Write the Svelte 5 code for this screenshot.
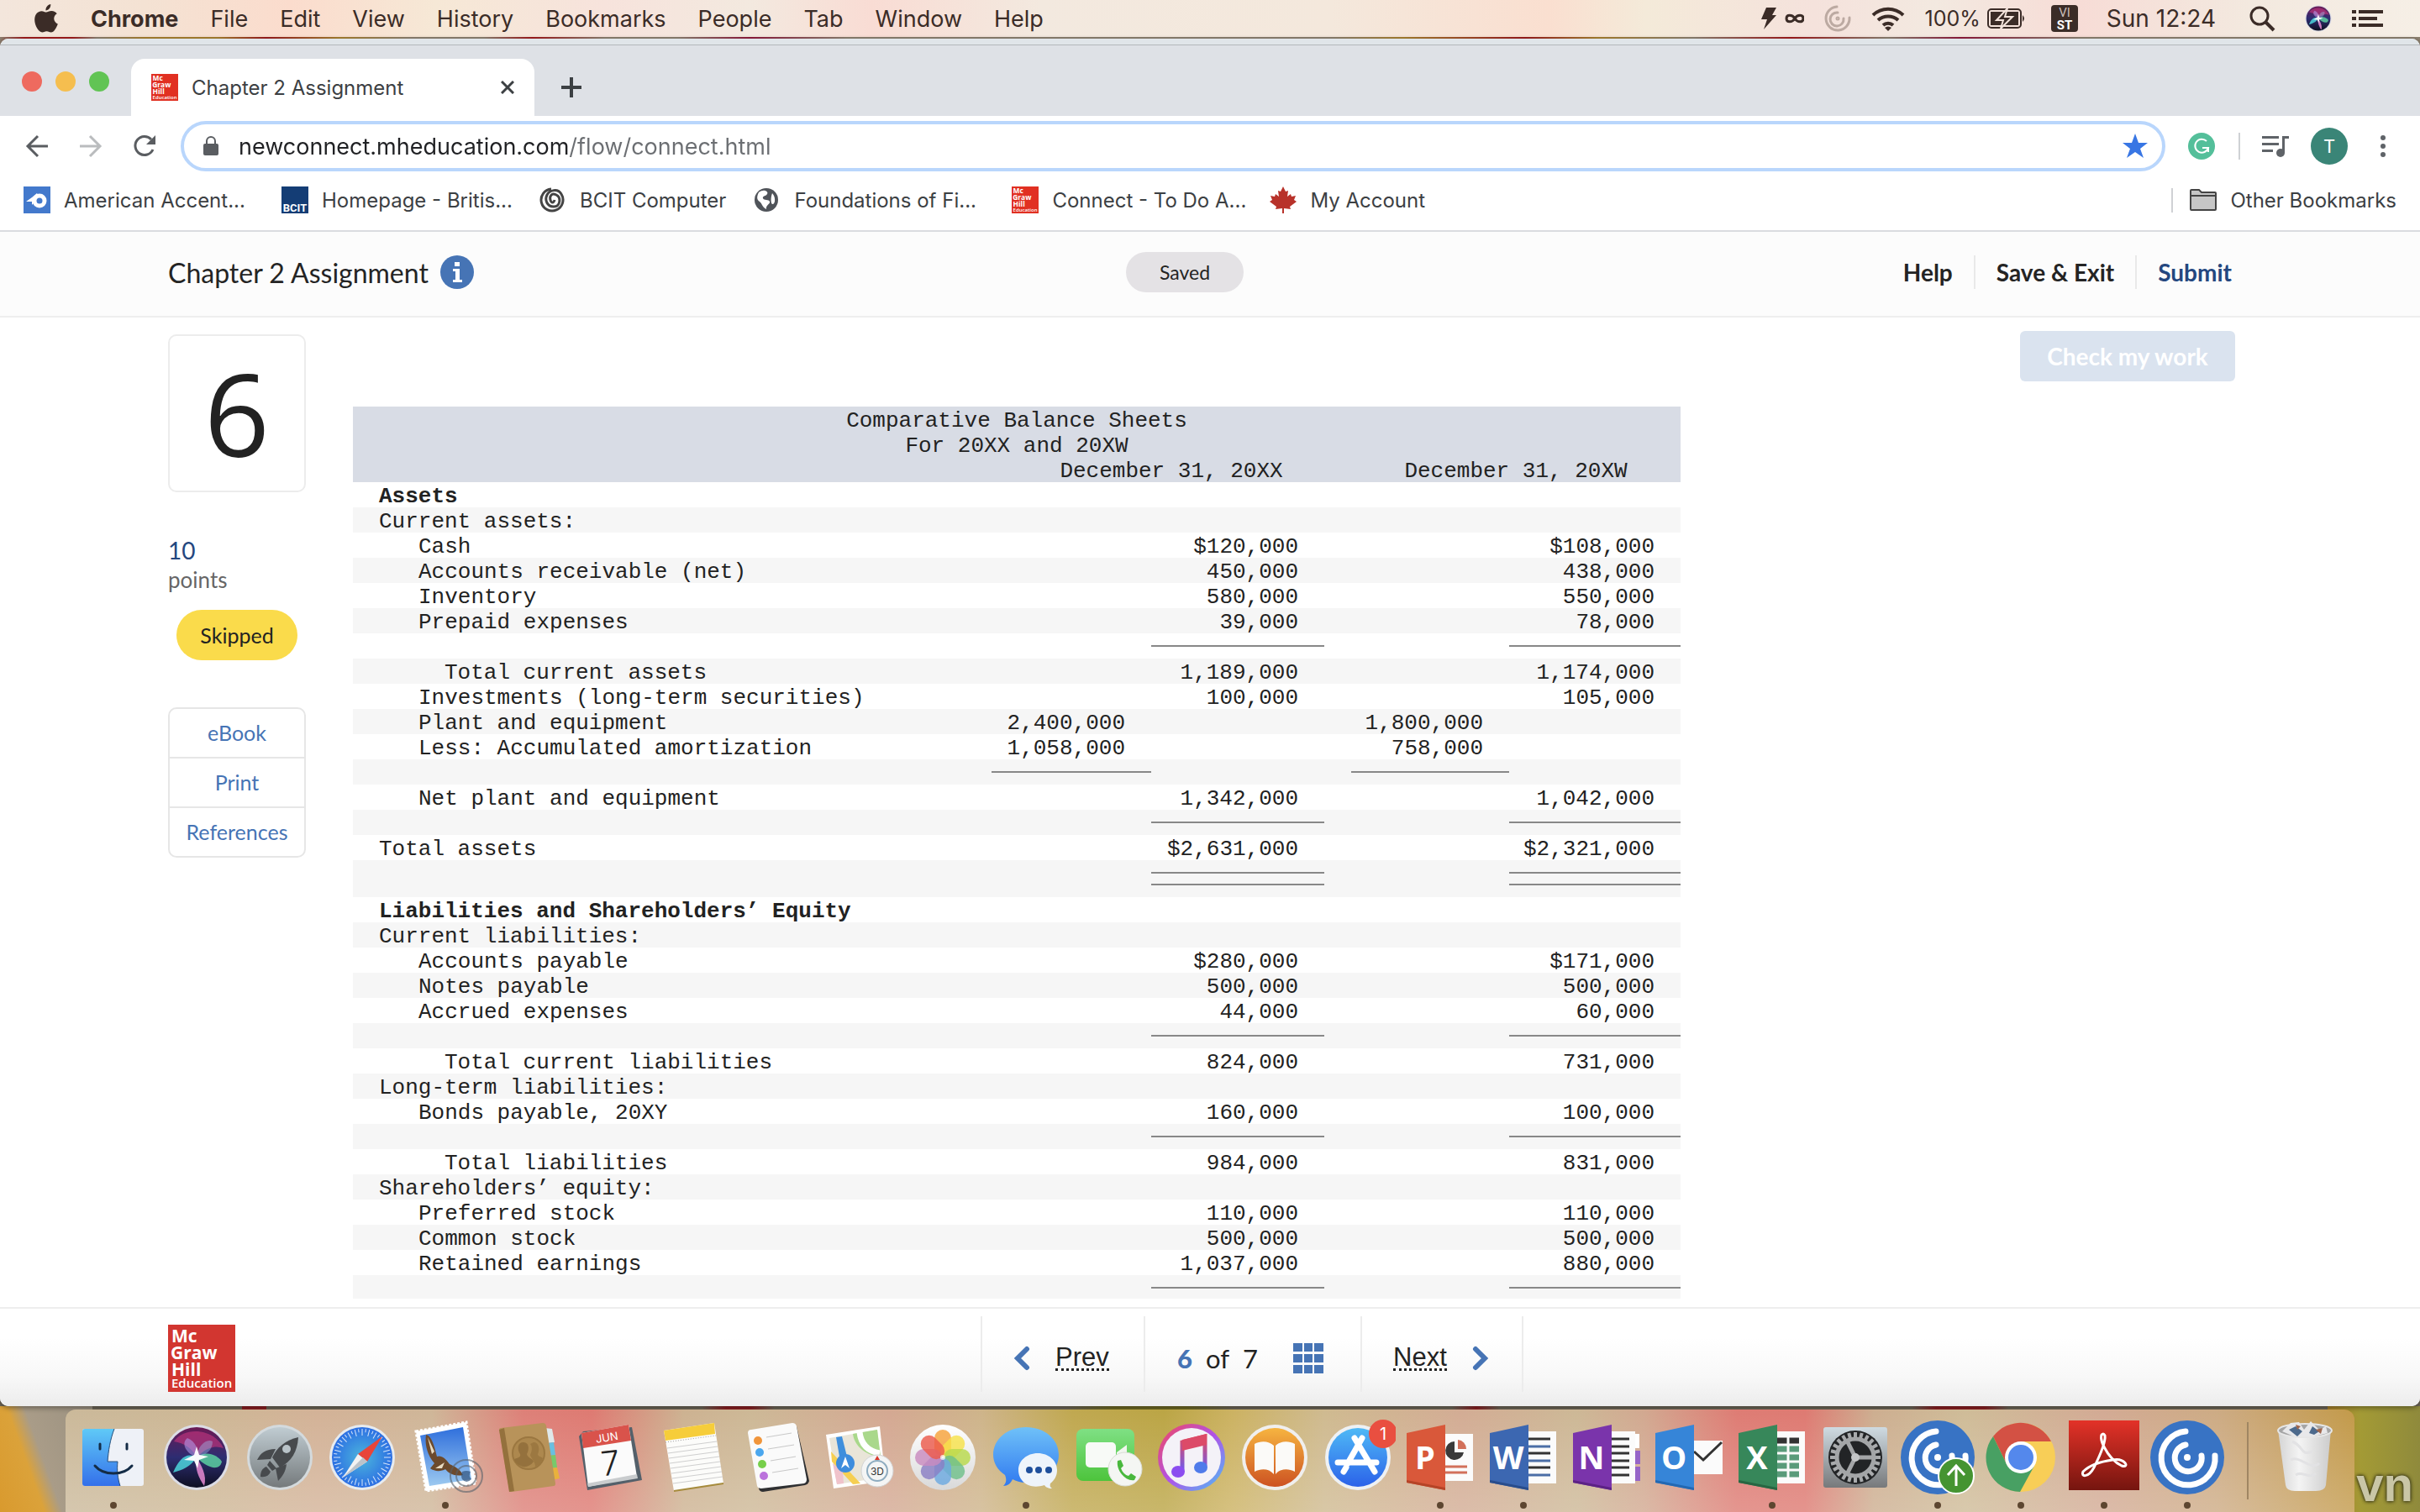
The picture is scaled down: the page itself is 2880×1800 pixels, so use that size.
<script>
	const menus = ['File', 'Edit', 'View', 'History', 'Bookmarks', 'People', 'Tab', 'Window', 'Help'];

	const bookmarks = [
		{ icon: 'accent', label: 'American Accent...', wide: true },
		{ icon: 'bcit', label: 'Homepage - Britis...', wide: true },
		{ icon: 'swirl', label: 'BCIT Computer' },
		{ icon: 'globe', label: 'Foundations of Fi...', wide: true },
		{ icon: 'mgh', label: 'Connect - To Do A...', wide: true },
		{ icon: 'leaf', label: 'My Account' },
	];

	// a/b are the two 20XX columns, c/d the two 20XW ones
	const rows = [
		{ label: 'Assets', bold: true },
		{ label: 'Current assets:' },
		{ label: 'Cash', level: 1, b: '$120,000', d: '$108,000' },
		{ label: 'Accounts receivable (net)', level: 1, b: '450,000', d: '438,000' },
		{ label: 'Inventory', level: 1, b: '580,000', d: '550,000' },
		{ label: 'Prepaid expenses', level: 1, b: '39,000', d: '78,000' },
		{ rule: 'bd' },
		{ label: 'Total current assets', level: 2, b: '1,189,000', d: '1,174,000' },
		{ label: 'Investments (long-term securities)', level: 1, b: '100,000', d: '105,000' },
		{ label: 'Plant and equipment', level: 1, a: '2,400,000', c: '1,800,000' },
		{ label: 'Less: Accumulated amortization', level: 1, a: '1,058,000', c: '758,000' },
		{ rule: 'ac' },
		{ label: 'Net plant and equipment', level: 1, b: '1,342,000', d: '1,042,000' },
		{ rule: 'bd' },
		{ label: 'Total assets', b: '$2,631,000', d: '$2,321,000' },
		{ rule: 'bd', double: true },
		{ label: 'Liabilities and Shareholders’ Equity', bold: true },
		{ label: 'Current liabilities:' },
		{ label: 'Accounts payable', level: 1, b: '$280,000', d: '$171,000' },
		{ label: 'Notes payable', level: 1, b: '500,000', d: '500,000' },
		{ label: 'Accrued expenses', level: 1, b: '44,000', d: '60,000' },
		{ rule: 'bd' },
		{ label: 'Total current liabilities', level: 2, b: '824,000', d: '731,000' },
		{ label: 'Long-term liabilities:' },
		{ label: 'Bonds payable, 20XY', level: 1, b: '160,000', d: '100,000' },
		{ rule: 'bd' },
		{ label: 'Total liabilities', level: 2, b: '984,000', d: '831,000' },
		{ label: 'Shareholders’ equity:' },
		{ label: 'Preferred stock', level: 1, b: '110,000', d: '110,000' },
		{ label: 'Common stock', level: 1, b: '500,000', d: '500,000' },
		{ label: 'Retained earnings', level: 1, b: '1,037,000', d: '880,000' },
		{ rule: 'bd' },
	];

	const dock = [
		{ name: 'Finder', open: true },
		{ name: 'Siri' },
		{ name: 'Launchpad' },
		{ name: 'Safari' },
		{ name: 'Mail', open: true },
		{ name: 'Contacts' },
		{ name: 'Calendar' },
		{ name: 'Notes' },
		{ name: 'Reminders' },
		{ name: 'Maps' },
		{ name: 'Photos' },
		{ name: 'Messages', open: true },
		{ name: 'FaceTime' },
		{ name: 'iTunes' },
		{ name: 'Books' },
		{ name: 'App Store' },
		{ name: 'PowerPoint', open: true },
		{ name: 'Word', open: true },
		{ name: 'OneNote' },
		{ name: 'Outlook' },
		{ name: 'Excel', open: true },
		{ name: 'System Preferences' },
		{ name: 'Receiver Update', open: true },
		{ name: 'Chrome', open: true },
		{ name: 'Acrobat', open: true },
		{ name: 'Receiver', open: true },
	];

	const petals = ['#f7a23b', '#f6e24a', '#b8d94c', '#6fc08a', '#6ca9e0', '#8a7fc4', '#c98bc0', '#ec5a4c'];
	const ticks = Array.from({ length: 48 }, (_, i) => i * 7.5);
	const teeth = Array.from({ length: 24 }, (_, i) => i * 15);

	let url = $state('newconnect.mheducation.com/flow/connect.html');
</script>

{#snippet mgh(size)}
	<svg width={size} height={size} viewBox="0 0 80 80" aria-hidden="true">
		<rect width="80" height="80" fill={size > 40 ? '#d23630' : '#e13022'} />
		<g fill="#fff" font-family="Open Sans, sans-serif" font-weight="700" font-size="21">
			<text x="4" y="21">Mc</text>
			<text x="3" y="41">Graw</text>
			<text x="4" y="61">Hill</text>
			<text x="4" y="75" font-size="15" font-weight="600">Education</text>
		</g>
	</svg>
{/snippet}

{#snippet siri()}
	<circle cx="45" cy="45" r="39" fill="#dcdde6" />
	<circle cx="45" cy="45" r="36" fill="url(#siri)" />
	<path d="M18 26C30 8 66 10 77 34C66 30 56 34 45 45C40 34 30 28 18 26Z" fill="#c0347c" opacity=".65" />
	<path d="M45 45C34 38 24 46 17 63C28 60 38 56 45 45Z" fill="#4fe0e4" opacity=".8" />
	<path d="M45 45C56 36 70 42 75 50C72 62 58 58 45 45Z" fill="#5fd9a5" opacity=".8" />
	<path d="M45 45C50 54 58 66 54 79C48 70 42 58 45 45Z" fill="#e78bd4" opacity=".85" />
	<path d="M45 45C32 40 26 28 34 22C44 26 48 36 45 45Z" fill="#b5a0f0" opacity=".55" />
	<path d="M45 45C46 32 56 22 64 26C64 36 56 43 45 45Z" fill="#a1c6f2" opacity=".4" />
	<path d="M45 32L48 42L59 44L48 48L46 58L42 49L30 48L42 42Z" fill="#fff" opacity=".95" />
{/snippet}

{#snippet receiver()}
	<circle cx="45" cy="45" r="44" fill="#3873c4" />
	<g fill="none" stroke="#fff" stroke-width="7" stroke-linecap="round">
		<path d="M43 14A32 32 0 1 0 78 43" />
		<path d="M43 30A16 16 0 1 0 62 43" />
	</g>
	<circle cx="45" cy="45" r="4" fill="#fff" />
{/snippet}

{#snippet office(letter, color, dark)}
	<path d="M5 16L51 6V84L5 75Z" fill={color} />
	<path d="M5 72L51 81V84L5 75Z" fill={dark} />
	<text x="27" y="59" text-anchor="middle" fill="#fff" font-family="Open Sans, sans-serif" font-weight="700" font-size="38">{letter}</text>
{/snippet}

{#snippet dockIcon(name)}
	<svg class="dock-icon" viewBox="0 0 90 90" aria-hidden="true">
		{#if name === 'Finder'}
			<rect x="8" y="11" width="73" height="68" rx="3" fill="#eef1f7" />
			<path d="M11 11H46C41 24 39 37 38 50H50C49 60 50 70 53 79H11Q8 79 8 76V14Q8 11 11 11Z" fill="url(#finder)" />
			<path d="M46 11C41 24 39 37 38 50H50C49 60 50 70 53 79" fill="none" stroke="#27507c" stroke-width="1" />
			<path d="M29 29V35M61 29V35" stroke="#142c46" stroke-width="3" stroke-linecap="round" />
			<path d="M23 55C33 67 57 67 67 55" fill="none" stroke="#142c46" stroke-width="3" stroke-linecap="round" />
		{:else if name === 'Siri'}
			{@render siri()}
		{:else if name === 'Launchpad'}
			<circle cx="45" cy="45" r="39" fill="#d4dadd" />
			<circle cx="45" cy="45" r="36" fill="url(#launch)" />
			<path d="M67 21C52 24 41 34 36 45L45 57C59 50 66 38 67 21Z" fill="#474a4d" />
			<path d="M40 35C28 35 22 40 18 48L34 47ZM53 53C52 62 48 68 43 73L40 58ZM33 49L41 58L36 61L30 54ZM29 56L34 62C32 67 28 69 22 68C22 62 24 58 29 56Z" fill="#474a4d" />
			<circle cx="53" cy="35" r="5" fill="#b9c3c8" />
		{:else if name === 'Safari'}
			<circle cx="45" cy="45" r="39" fill="#e7ebef" />
			<circle cx="45" cy="45" r="36" fill="url(#safari)" />
			{#each ticks as t, i (t)}
				<path d={i % 2 ? 'M45 11V15' : 'M45 11V19'} stroke="#fff" stroke-width="1" opacity=".8" transform="rotate({t} 45 45)" />
			{/each}
			<path d="M69 20L51 50L40 41Z" fill="#e8453a" />
			<path d="M22 69L40 41L51 50Z" fill="#f2f2f2" />
			<path d="M22 69L51 50L46 45Z" fill="#bcc3ca" />
		{:else if name === 'Mail'}
			<path d="M10 14L70 3L81 76L22 85Z" fill="#fff" stroke="#fff" stroke-width="3" stroke-dasharray="3 2" />
			<path d="M15 19L66 9L76 71L26 79Z" fill="url(#sky)" />
			<path d="M22 18C28 19 31 28 35 44C40 42 45 46 50 53C56 56 62 58 66 66C56 68 49 64 45 59C40 62 32 62 27 58L32 52C25 44 20 32 22 18Z" fill="#6c4a2c" />
			<path d="M24 21L32 38L29 41ZM33 58L44 51L41 58Z" fill="#e9dcc2" />
			<circle cx="70" cy="67" r="19" fill="none" stroke="#56606b" stroke-width="2" opacity=".6" />
			<circle cx="70" cy="67" r="12" fill="none" stroke="#56606b" stroke-width="2" opacity=".6" />
			<path d="M65 62Q70 60 75 62Q72 67 76 71Q70 77 65 71Q63 66 65 62Z" fill="#30527c" opacity=".7" />
		{:else if name === 'Contacts'}
			<path d="M64 10L73 11L76 27L68 28Z" fill="#dfe8ea" />
			<path d="M67 28L75 27L77 42L70 43Z" fill="#69bfe0" />
			<path d="M69 43L77 42L79 57L72 58Z" fill="#78c96b" />
			<path d="M71 58L79 57L82 70L73 72Z" fill="#e9b13c" />
			<path d="M10 12Q10 10 12 10L62 4Q65 4 66 7L77 76Q77 79 75 79L25 86Q22 86 22 84Z" fill="#b8935a" />
			<path d="M10 12L16 10L28 85L22 86Z" fill="#94713d" />
			<circle cx="45" cy="40" r="19" fill="#ad884e" stroke="#9b7740" stroke-width="2" />
			<path d="M39 27C46 27 46 36 43 41C44 46 50 46 51 50Q46 57 38 56Q29 53 28 47C34 45 36 44 35 41C31 35 32 27 39 27Z" fill="#94713d" />
			<path d="M51 27C57 27 59 35 56 41C56 44 60 44 62 46Q60 53 53 56C53 50 48 46 47 42C50 36 49 31 47 29Z" fill="#9c7841" />
		{:else if name === 'Calendar'}
			<path d="M7 20L12 14L70 9L82 72L17 84Z" fill="#54606a" />
			<path d="M10 16L66 6L76 68L18 80Z" fill="#fbfbfb" />
			<path d="M10 16L66 6L69 25L12 34Z" fill="#d9534b" />
			<path d="M17 76L76 65L77 70L18 80Z" fill="#c9ccce" />
			<text x="40" y="26" text-anchor="middle" fill="#fff" font-family="Inter, sans-serif" font-size="13" transform="rotate(-9 40 20)">JUN</text>
			<text x="45" y="66" text-anchor="middle" fill="#222" font-family="Inter, sans-serif" font-size="40" font-weight="300" transform="rotate(-7 44 54)">7</text>
		{:else if name === 'Notes'}
			<path d="M9 13L69 4L80 76L21 85Z" fill="#fcfcfa" />
			<path d="M9 13L69 4L70 17L11 25Z" fill="#f6cd3a" />
			<path d="M11 27L71 19" stroke="#999" stroke-dasharray="1 2" />
			<path d="M13 34L72 26M14 40L73 32M15 46L74 38M16 52L75 44M17 58L76 50M18 64L77 56M19 70L78 62M20 76L79 68" stroke="#cfcfcf" stroke-width="1" />
			<path d="M21 85L80 76" stroke="#a68b3c" stroke-width="2" />
		{:else if name === 'Reminders'}
			<path d="M14 18L68 8L83 73Q82 77 78 78L28 86Q24 86 23 82Z" fill="#2f3032" />
			<path d="M10 16Q10 12 14 12L63 4Q67 4 68 8L80 71Q80 75 77 76L26 82Q22 82 21 79Z" fill="#fafafa" />
			<circle cx="22" cy="25" r="5" fill="#f0953b" />
			<circle cx="24" cy="39" r="5" fill="#4ba7ee" />
			<circle cx="27" cy="53" r="5" fill="#77cf4b" />
			<circle cx="29" cy="67" r="5" fill="#bb73dc" />
			<path d="M32 21L62 16M34 35L65 30M37 49L67 44M39 63L70 58" stroke="#c8c8c8" stroke-width="1" />
		{:else if name === 'Maps'}
			<path d="M4 18L68 8L75 73L13 82Z" fill="#fff" />
			<path d="M8 22L65 12L71 69L17 77Z" fill="#e9e5d8" />
			<path d="M36 17L65 12L69 44C56 44 38 34 36 17Z" fill="#a9d88b" />
			<path d="M44 15C46 32 56 38 68 40" stroke="#fff" stroke-width="7" fill="none" />
			<path d="M10 38L45 76L36 77L11 50Z" fill="#f6cf52" />
			<path d="M16 21L23 20L29 44H20Z" fill="#3f8fdc" />
			<path d="M12 52L24 62L25 76L17 77Z" fill="#f0c3cb" />
			<circle cx="27" cy="52" r="11" fill="#3e8ddd" />
			<path d="M27 44L32 58L27 54L22 58Z" fill="#fff" />
			<circle cx="65" cy="61" r="19" fill="#f4f5f5" stroke="#d2d3d4" />
			<circle cx="65" cy="61" r="12" fill="none" stroke="#8eacc0" stroke-width="2" />
			<path d="M65 43L68 48H62Z" fill="#d8382c" />
			<text x="65" y="66" text-anchor="middle" font-family="Inter, sans-serif" font-size="12" fill="#333">3D</text>
		{:else if name === 'Photos'}
			<circle cx="45" cy="45" r="39" fill="url(#pearl)" />
			{#each petals as p, i (p)}
				<rect x="35" y="12" width="20" height="32" rx="10" fill={p} opacity=".82" transform="rotate({i * 45} 45 45)" />
			{/each}
			<circle cx="45" cy="45" r="3" fill="#fff" opacity=".7" />
		{:else if name === 'Messages'}
			<path d="M45 9C67 9 84 23 84 42S67 75 45 75C38 75 33 73 29 71C27 76 23 79 18 79C22 75 22 71 20 66C11 60 6 51 6 42C6 23 23 9 45 9Z" fill="url(#bubble)" />
			<path d="M59 40C72 40 82 49 82 60C82 67 79 72 74 76C73 79 74 81 76 82C71 82 68 80 67 78C48 84 36 73 36 60C36 49 46 40 59 40Z" fill="#eef4fb" />
			<circle cx="49" cy="60" r="4" fill="#1f4f9c" />
			<circle cx="60" cy="60" r="4" fill="#1f4f9c" />
			<circle cx="72" cy="60" r="4" fill="#1f4f9c" />
		{:else if name === 'FaceTime'}
			<rect x="6" y="11" width="69" height="62" rx="8" fill="url(#green)" />
			<rect x="17" y="27" width="36" height="30" rx="5" fill="#f8faf7" />
			<path d="M54 39L66 30V54L54 46Z" fill="#f1f6ef" />
			<circle cx="64" cy="59" r="20" fill="#f4f6f3" stroke="#d9ddd6" />
			<path d="M55 49L59 48L62 55L59 58C61 63 64 66 68 67L71 64L77 68L75 72C65 74 53 61 55 49Z" fill="#49b83d" />
		{:else if name === 'iTunes'}
			<circle cx="45" cy="45" r="40" fill="url(#itunes)" />
			<circle cx="45" cy="45" r="35" fill="#f4f2f8" />
			<path d="M34 62V27L61 20V56" fill="none" stroke="url(#note)" stroke-width="5" />
			<path d="M34 24L63 17V30L34 37Z" fill="#dc4a68" />
			<ellipse cx="29" cy="62" rx="8" ry="7" fill="#8b4df0" />
			<ellipse cx="56" cy="57" rx="8" ry="7" fill="#4f7bea" />
		{:else if name === 'Books'}
			<circle cx="45" cy="45" r="39" fill="#f0efee" />
			<circle cx="45" cy="45" r="35" fill="url(#books)" />
			<path d="M44 31C38 25 28 25 21 29V62C29 58 38 58 44 65ZM46 31C52 25 62 25 69 29V62C61 58 52 58 46 65Z" fill="#fbfaf8" />
		{:else if name === 'App Store'}
			<circle cx="45" cy="45" r="39" fill="#eef1f4" />
			<circle cx="45" cy="45" r="35" fill="url(#store)" />
			<g stroke="#fff" stroke-width="7" stroke-linecap="round">
				<path d="M50 22L33 52M31 57L28 62M41 22L65 62M21 51H67" />
			</g>
			<circle cx="75" cy="17" r="17" fill="#e94f40" />
			<text x="75" y="24" text-anchor="middle" font-family="Inter, sans-serif" font-size="20" fill="#fff">1</text>
		{:else if name === 'PowerPoint'}
			<rect x="46" y="17" width="38" height="56" fill="#fbfbfb" />
			<path d="M62 26A11 11 0 1 0 73 39H62Z" fill="#3a3a3a" />
			<path d="M66 24A11 11 0 0 1 76 35H66Z" fill="#d2705a" />
			<path d="M51 56H77M51 63H77" stroke="#d2705a" stroke-width="3" />
			{@render office('P', '#d9583a', '#b54427')}
		{:else if name === 'Word'}
			<rect x="46" y="14" width="38" height="62" fill="#fbfbfb" />
			<path d="M51 23H77M51 40H77M51 57H77" stroke="#333" stroke-width="3" />
			<path d="M51 32H77M51 49H77M51 66H77" stroke="#4b6ea6" stroke-width="3" />
			{@render office('W', '#3c67b1', '#294d8c')}
		{:else if name === 'OneNote'}
			<path d="M79 17H84V34H79Z" fill="#fff" />
			<path d="M79 37H85V53H79ZM79 56H85V73H79Z" fill="#9665c8" />
			<rect x="46" y="14" width="33" height="62" fill="#fbfbfb" />
			<path d="M51 23H72M51 32H72M51 40H72M51 49H72M51 57H72M51 66H72" stroke="#333" stroke-width="3" />
			{@render office('N', '#7a34ab', '#5c2285')}
		{:else if name === 'Outlook'}
			<rect x="46" y="25" width="39" height="40" fill="#fbfbfb" />
			<path d="M51 38L62 48L84 27" fill="none" stroke="#333" stroke-width="3" />
			{@render office('O', '#3685d8', '#2368b2')}
		{:else if name === 'Excel'}
			<rect x="46" y="14" width="38" height="62" fill="#fbfbfb" />
			<path d="M51 25H77" stroke="#333" stroke-width="7" />
			<path d="M51 35H77M51 45H77M51 55H77M51 65H77" stroke="#5a9b7a" stroke-width="7" />
			<path d="M64 18V72" stroke="#fbfbfb" stroke-width="3" />
			{@render office('X', '#37875a', '#286642')}
		{:else if name === 'System Preferences'}
			<rect x="7" y="9" width="76" height="72" rx="3" fill="url(#prefs)" />
			<circle cx="45" cy="45" r="32" fill="#222426" />
			{#each teeth as t (t)}
				<path d="M43 15H47V22H43Z" fill="#a9abad" transform="rotate({t} 45 45)" />
			{/each}
			<circle cx="45" cy="45" r="22" fill="none" stroke="#a3a5a7" stroke-width="5" />
			<path d="M45 45L35 25M45 45H67M45 45L35 65" stroke="#a3a5a7" stroke-width="5" />
			<circle cx="45" cy="45" r="5" fill="#c4c6c8" />
		{:else if name === 'Receiver Update'}
			{@render receiver()}
			<circle cx="67" cy="67" r="21" fill="#459431" stroke="#fff" stroke-width="2" />
			<path d="M67 79V56M57 66L67 55L77 66" fill="none" stroke="#fff" stroke-width="3" />
		{:else if name === 'Chrome'}
			<circle cx="45" cy="45" r="41" fill="#f8ce57" />
			<path d="M45 26H81A41 41 0 0 0 12 20L29 55L45 45Z" fill="#d35144" />
			<path d="M12 20A41 41 0 0 0 44 86L61 55L29 55Z" fill="#48a063" />
			<circle cx="45" cy="45" r="19" fill="#fff" />
			<circle cx="45" cy="45" r="15" fill="#5488ec" />
		{:else if name === 'Acrobat'}
			<rect x="3" y="1" width="84" height="83" fill="url(#acro)" />
			<path d="M44 17C36 18 48 46 66 55C76 58 70 45 55 48C40 50 27 55 20 62C17 68 26 70 33 57C40 43 47 26 46 19Q45 17 44 17Z" fill="none" stroke="#fff" stroke-width="3" />
		{:else}
			{@render receiver()}
		{/if}
	</svg>
{/snippet}

<!-- shared gradients for the dock and menu bar icons -->
<svg class="defs" width="0" height="0" aria-hidden="true">
	<defs>
		<linearGradient id="finder" x2="0" y2="1"><stop stop-color="#5fc9f7" /><stop offset="1" stop-color="#3470ea" /></linearGradient>
		<linearGradient id="siri" x2="0" y2="1"><stop stop-color="#6b1a55" /><stop offset=".5" stop-color="#2d2d72" /><stop offset="1" stop-color="#0e0f22" /></linearGradient>
		<linearGradient id="launch" x2="0" y2="1"><stop stop-color="#c0ccd2" /><stop offset="1" stop-color="#757a7c" /></linearGradient>
		<radialGradient id="safari"><stop stop-color="#4cb6dc" /><stop offset="1" stop-color="#2c6fe3" /></radialGradient>
		<linearGradient id="sky" x2="0" y2="1"><stop stop-color="#2f6fdc" /><stop offset="1" stop-color="#9cc9f0" /></linearGradient>
		<linearGradient id="pearl" x2="0" y2="1"><stop stop-color="#ffffff" /><stop offset="1" stop-color="#d9d9d9" /></linearGradient>
		<linearGradient id="bubble" x2="0" y2="1"><stop stop-color="#6fc1f8" /><stop offset="1" stop-color="#3079f0" /></linearGradient>
		<linearGradient id="green" x2="0" y2="1"><stop stop-color="#7fe084" /><stop offset="1" stop-color="#4dc43c" /></linearGradient>
		<linearGradient id="itunes" x2="1" y2="1"><stop stop-color="#f4485a" /><stop offset=".5" stop-color="#b052e8" /><stop offset="1" stop-color="#49c3f5" /></linearGradient>
		<linearGradient id="note" x2="0" y2="1"><stop stop-color="#e44a5e" /><stop offset="1" stop-color="#6b5cf0" /></linearGradient>
		<linearGradient id="books" x2="0" y2="1"><stop stop-color="#f6b440" /><stop offset="1" stop-color="#cd5222" /></linearGradient>
		<linearGradient id="store" x2="0" y2="1"><stop stop-color="#4fb9f6" /><stop offset="1" stop-color="#2b62e9" /></linearGradient>
		<linearGradient id="prefs" x2="0" y2="1"><stop stop-color="#cfdbe2" /><stop offset="1" stop-color="#77797b" /></linearGradient>
		<linearGradient id="acro" x2="0" y2="1"><stop stop-color="#e33228" /><stop offset="1" stop-color="#75150f" /></linearGradient>
		<linearGradient id="basket" x2="1" y2="0"><stop stop-color="#d4d4d4" /><stop offset=".4" stop-color="#f4f4f4" /><stop offset="1" stop-color="#cccccc" /></linearGradient>
	</defs>
</svg>

<div class="desktop">
	<header class="menubar">
		<nav class="menus" aria-label="Menu bar">
			<svg class="apple" width="30" height="34" viewBox="0 0 28 32" aria-hidden="true">
				<path d="M19 0C19.200 4 16.500 7 13.500 7C13.200 3.500 16 .5 19 0ZM14 9C15.500 9 17 7.500 20 7.500C22.500 7.500 25 9 26 10.500C21 13.500 22 20 27 22C25.500 26.500 22.500 31.500 19.500 31.500C17.500 31.500 17 30.300 14.500 30.300S11.500 31.500 9.500 31.500C5.500 31.500 1 24 1 17.500C1 11 5 7.700 8.800 7.700C11 7.700 12.800 9 14 9Z" fill="#3b2c27" />
			</svg>
			<button class="app">Chrome</button>
			{#each menus as m (m)}
				<button>{m}</button>
			{/each}
		</nav>
		<div class="status">
			<svg width="52" height="32" viewBox="0 0 52 32" fill="#3b2c27" aria-hidden="true">
				<path d="M7 3H19L14 12H19L4 29L8 17H1Z" />
				<path d="M41 16C38 11 31 11 31 16S38 21 41 16C44 11 51 11 51 16S44 21 41 16Z" fill="none" stroke="#3b2c27" stroke-width="3" />
			</svg>
			<svg width="32" height="32" viewBox="0 0 32 32" fill="none" stroke="#bcaaa2" stroke-width="3" stroke-linecap="round" aria-hidden="true">
				<path d="M15 2A14 14 0 1 0 30 15M16 9A8 8 0 1 0 23 16" />
				<circle cx="16" cy="16" r="1" />
			</svg>
			<svg width="40" height="32" viewBox="0 0 40 32" fill="none" stroke="#3b2c27" stroke-width="4" aria-hidden="true">
				<path d="M2 12A26 26 0 0 1 38 12M8 18A18 18 0 0 1 32 18M14 24A9 9 0 0 1 26 24" />
				<path d="M16 27L20 31L24 27Q20 24 16 27Z" fill="#3b2c27" stroke="none" />
			</svg>
			<span class="battery">
				100%
				<svg width="46" height="26" viewBox="0 0 46 26" aria-hidden="true">
					<rect x="1" y="2" width="39" height="22" rx="4" fill="none" stroke="#3b2c27" stroke-width="2" />
					<rect x="4" y="5" width="33" height="16" fill="#3b2c27" />
					<path d="M42 9Q46 13 42 17Z" fill="#3b2c27" />
					<path d="M24 1L11 15H19L16 25L30 11H21Z" fill="#3b2c27" stroke="#f4e4dc" stroke-width="2" />
				</svg>
			</span>
			<svg width="48" height="34" viewBox="0 0 48 34" aria-hidden="true">
				<rect x="6" y="1" width="32" height="32" rx="4" fill="#3b2c27" />
				<text x="22" y="15" text-anchor="middle" font-family="Roboto, sans-serif" font-size="15" fill="#c9bdb8">VI</text>
				<text x="22" y="30" text-anchor="middle" font-family="Roboto, sans-serif" font-size="15" font-weight="700" fill="#fff">ST</text>
			</svg>
			<time>Sun 12:24</time>
			<svg width="58" height="32" viewBox="0 0 58 32" fill="none" stroke="#3b2c27" stroke-width="3" aria-hidden="true">
				<circle cx="28" cy="13" r="10" />
				<path d="M35 20L45 30" stroke-width="4" />
			</svg>
			<svg width="32" height="32" viewBox="5 5 80 80" aria-hidden="true">{@render siri()}</svg>
			<svg width="37" height="24" viewBox="0 0 37 24" fill="#3b2c27" aria-hidden="true">
				<path d="M0 2H5V6H0ZM8 2H37V6H8ZM0 10H5V14H0ZM8 10H30V14H8ZM0 18H5V22H0ZM8 18H37V22H8Z" />
			</svg>
		</div>
	</header>

	<div class="window">
		<div class="tabstrip">
			<div class="lights"><span class="red"></span><span class="amber"></span><span class="green"></span></div>
			<div class="tab">
				{@render mgh(32)}
				<span class="tab-title">Chapter 2 Assignment</span>
				<button aria-label="Close tab">
					<svg width="16" height="16" viewBox="0 0 16 16"><path d="M1 1L15 15M15 1L1 15" stroke="#3c4043" stroke-width="3" /></svg>
				</button>
			</div>
			<button class="newtab" aria-label="New tab">
				<svg width="24" height="24" viewBox="0 0 24 24"><path d="M12 0V24M0 12H24" stroke="#3c4043" stroke-width="4" /></svg>
			</button>
		</div>

		<div class="toolbar">
			<div class="history">
				<button aria-label="Back">
					<svg width="28" height="28" viewBox="0 0 28 28" fill="none" stroke="#5a5d61" stroke-width="3"><path d="M27 14H3M15 2L3 14L15 26" /></svg>
				</button>
				<button aria-label="Forward">
					<svg width="28" height="28" viewBox="0 0 28 28" fill="none" stroke="#babcbe" stroke-width="3"><path d="M1 14H25M13 2L25 14L13 26" /></svg>
				</button>
				<button aria-label="Reload">
					<svg width="28" height="28" viewBox="0 0 28 28"><path d="M24 18A11 11 0 1 1 22 6" fill="none" stroke="#5a5d61" stroke-width="3" /><path d="M27 1V12H16Z" fill="#5a5d61" /></svg>
				</button>
			</div>
			<label class="omnibox">
				<svg width="18" height="24" viewBox="0 0 18 24"><rect y="9" width="18" height="14" rx="2" fill="#5a5d61" /><path d="M4 10V6A5 5 0 0 1 14 6V10" fill="none" stroke="#5a5d61" stroke-width="2" /></svg>
				<input type="text" aria-label="Address" bind:value={url} />
				<svg width="32" height="32" viewBox="0 0 32 32"><path d="M16 1L20 12H31L22 19L26 30L16 23L6 30L10 19L1 12H12Z" fill="#3876e4" /></svg>
			</label>
			<div class="extensions">
				<svg width="32" height="32" viewBox="0 0 32 32" aria-hidden="true">
					<circle cx="16" cy="16" r="16" fill="#54bf9a" />
					<path d="M22 10A8 8 0 1 0 24 18H17M24 17V23" fill="none" stroke="#fff" stroke-width="2" />
				</svg>
				<span class="bar"></span>
				<svg width="32" height="26" viewBox="0 0 32 26" fill="#5f6368" aria-hidden="true">
					<path d="M0 1H20V4H0ZM0 9H20V12H0ZM0 17H13V20H0ZM24 1H32V4H27V21H24Z" />
					<circle cx="22" cy="21" r="5" />
				</svg>
				<span class="avatar">T</span>
				<svg width="8" height="28" viewBox="0 0 8 28" fill="#5f6368" aria-hidden="true"><circle cx="4" cy="4" r="3" /><circle cx="4" cy="14" r="3" /><circle cx="4" cy="24" r="3" /></svg>
			</div>
		</div>

		<nav class="bookmarks" aria-label="Bookmarks">
			{#each bookmarks as b (b.label)}
				<a href="#bookmark" class:wide={b.wide}>
					{#if b.icon === 'mgh'}
						{@render mgh(32)}
					{:else}
						<svg width="32" height="32" viewBox="0 0 32 32" aria-hidden="true">
							{#if b.icon === 'accent'}
								<rect width="32" height="32" fill="#4379cc" />
								<circle cx="19" cy="17" r="6" fill="none" stroke="#fff" stroke-width="5" />
								<path d="M3 18L10 13L16 8L18 12L10 22V18Z" fill="#fff" />
							{:else if b.icon === 'bcit'}
								<rect width="32" height="32" fill="#143d75" />
								<text x="16" y="30" text-anchor="middle" font-family="Roboto, sans-serif" font-size="13" font-weight="700" fill="#fff">BCIT</text>
							{:else if b.icon === 'swirl'}
								<g fill="none" stroke="#444" stroke-width="3">
									<path d="M14 3A13 13 0 1 0 26 9C22 2 12 4 9 10S9 24 17 24S26 13 20 10S12 12 13 16S17 20 18 16" />
								</g>
							{:else if b.icon === 'globe'}
								<circle cx="15" cy="16" r="14" fill="#50545a" />
								<path d="M6 7C12 2 18 6 16 9S10 11 11 14S18 15 19 18S14 22 15 27C10 25 10 20 7 18S3 13 6 7ZM22 8C26 12 26 20 23 21S20 13 22 8Z" fill="#fff" />
							{:else}
								<path d="M16 0L19 6L22 5L21 12L25 9L26 12L31 11L29 16L32 18L24 24L25 27L17 26V32H15V26L7 27L8 24L0 18L3 16L1 11L6 12L7 9L11 12L10 5L13 6Z" fill="#b8322a" />
							{/if}
						</svg>
					{/if}
					<span>{b.label}</span>
				</a>
			{/each}
			<a href="#other" class="other">
				<svg width="32" height="26" viewBox="0 0 32 26" aria-hidden="true">
					<path d="M1 2Q1 1 2 1H11L14 4H30Q31 4 31 5V24Q31 25 30 25H2Q1 25 1 24Z" fill="#c6c6c6" stroke="#444" stroke-width="2" />
					<path d="M2 8H30" stroke="#444" stroke-width="2" />
				</svg>
				<span>Other Bookmarks</span>
			</a>
		</nav>

		<div class="page-head">
			<h1>
				Chapter 2 Assignment
				<svg width="40" height="40" viewBox="0 0 40 40" aria-hidden="true">
					<circle cx="20" cy="20" r="20" fill="#4674b5" />
					<path d="M17 8H23V13H17ZM15 16H23V29H26V32H15V29H18V19H15Z" fill="#fff" />
				</svg>
			</h1>
			<span class="saved">Saved</span>
			<div class="actions">
				<button>Help</button>
				<button>Save &amp; Exit</button>
				<button class="submit">Submit</button>
			</div>
		</div>

		<main>
			<aside>
				<div class="number">6</div>
				<p class="points"><strong>10</strong>points</p>
				<span class="skipped">Skipped</span>
				<nav class="links" aria-label="Resources">
					<a href="#ebook">eBook</a>
					<a href="#print">Print</a>
					<a href="#references">References</a>
				</nav>
			</aside>

			<table>
				<colgroup>
					<col />
					<col class="c-a" />
					<col class="c-b" />
					<col class="c-gap" />
					<col class="c-c" />
					<col class="c-d" />
				</colgroup>
				<thead>
					<tr><th colspan="6">Comparative Balance Sheets</th></tr>
					<tr><th colspan="6">For 20XX and 20XW</th></tr>
					<tr>
						<th></th>
						<th colspan="2" class="first">December 31, 20XX</th>
						<th></th>
						<th colspan="2">December 31, 20XW</th>
					</tr>
				</thead>
				<tbody>
					{#each rows as r}
						<tr class:tall={r.double}>
							<td class="label level-{r.level ?? 0}" class:bold={r.bold}>{r.label ?? ''}</td>
							{#each ['a', 'b', 'gap', 'c', 'd'] as col (col)}
								<td class="num">
									{#if r.rule?.includes(col)}
										<div class="rule" class:double={r.double}></div>
									{:else}
										{r[col] ?? ''}
									{/if}
								</td>
							{/each}
						</tr>
					{/each}
				</tbody>
			</table>

			<button class="check" disabled>Check my work</button>
		</main>

		<footer>
			{@render mgh(80)}
			<nav class="pager" aria-label="Questions">
				<a href="#prev" class="prev">
					<svg width="20" height="30" viewBox="0 0 20 30" aria-hidden="true"><path d="M16 4L5 15L16 26" fill="none" stroke="#4674b5" stroke-width="6" stroke-linecap="round" /></svg>
					<span>Prev</span>
				</a>
				<div class="count">
					<strong>6</strong><span>of</span><span>7</span>
					<svg width="36" height="36" viewBox="0 0 36 36" fill="#4674b5" aria-hidden="true"><path d="M0 0H11V10H0ZM13 0H23V10H13ZM25 0H36V10H25ZM0 13H11V23H0ZM13 13H23V23H13ZM25 13H36V23H25ZM0 26H11V36H0ZM13 26H23V36H13ZM25 26H36V36H25Z" /></svg>
				</div>
				<a href="#next" class="next">
					<span>Next</span>
					<svg width="20" height="30" viewBox="0 0 20 30" aria-hidden="true"><path d="M4 4L15 15L4 26" fill="none" stroke="#4674b5" stroke-width="6" stroke-linecap="round" /></svg>
				</a>
			</nav>
		</footer>
	</div>

	<span class="watermark">vn</span>
	<div class="dock">
		<div class="apps">
			{#each dock as item (item.name)}
				<button class="slot" aria-label={item.name}>
					{@render dockIcon(item.name)}
					<span class="dot" class:open={item.open}></span>
				</button>
			{/each}
		</div>
		<button class="trash" aria-label="Trash">
			<svg class="dock-icon" viewBox="0 0 90 90" aria-hidden="true">
				<path d="M13 12L76 12L70 78Q69 85 58 85H33Q23 85 22 78Z" fill="url(#basket)" />
				<ellipse cx="45" cy="13" rx="32" ry="8" fill="#a5a5a5" stroke="#e6e6e6" stroke-width="2" />
				<path d="M18 14L28 4L38 3L44 12L52 2L62 12L70 8L72 16L56 20H32Z" fill="#e8e8ea" />
				<path d="M26 12L34 8L42 14L36 20ZM54 8L62 14L56 18L50 16Z" fill="#4d6a8c" />
				<path d="M34 6L40 8L36 12ZM58 12L66 10L64 17Z" fill="#a0664c" />
				<path d="M30 26C44 32 40 44 54 38M28 48C40 42 52 62 62 52M34 66C42 60 50 72 58 64" stroke="#e2e2e4" stroke-width="3" fill="none" />
			</svg>
		</button>
	</div>
</div>

<style>
	:global(body) {
		margin: 0;
	}

	.defs {
		position: absolute;
	}

	button {
		font: inherit;
		color: inherit;
		background: none;
		border: 0;
		padding: 0;
	}

	a {
		color: inherit;
		text-decoration: none;
	}

	svg {
		display: block;
		flex: none;
	}

	/* wallpaper shows in the top strip, under the window and beside the dock */
	.desktop {
		height: 100vh;
		display: flex;
		flex-direction: column;
		position: relative;
		overflow: hidden;
		font-family: Inter, sans-serif;
		background:
			linear-gradient(90deg, #8c8070 0, #a01b1c 1%, #a01b1c 3%, #8c8070 4%, #a8802f 6%, #a8802f 9%, #9a1b1c 11%, #a8802f 14%, #8c8070 17%, #8c8070 20%, #a01b1c 22%, #8c8070 25%, #8c8070 28%, #8f1b3c 31%, #8c8070 35%, #8c8070 55%, #a8802f 58%, #9a1b1c 63%, #a8802f 66%, #8c8070 70%, #a01b1c 74%, #8c8070 78%, #8f1b3c 81%, #8c8070 86%) left top / 100% 60px no-repeat,
			linear-gradient(70deg, #d99a2e 0, #dba23a 50px, #a99c88 70px, #9b9180) left bottom / 110px 126px no-repeat,
			linear-gradient(90deg, #a9802a, #a39a35 40px, #8f8a3c) right bottom / 110px 126px no-repeat,
			linear-gradient(90deg, #6e6657 0 10%, #8c1f22 10% 11%, #6e6657 11% 29%, #8c1f22 30% 31%, #6e6657 32% 44%, #6f6a22 46% 49%, #6e6657 51% 60%, #8c1f22 61%, #6e6657 62% 79%, #8c1f22 80% 82%, #6e6657 83%);
	}

	.menubar {
		display: flex;
		justify-content: space-between;
		align-items: center;
		height: 44px;
		padding: 0 44px 0 40px;
		font-size: 27px;
		color: #3b2c27;
		background: linear-gradient(90deg, #f3e6dc 0, #f4e2d3 6%, #fbdccd 12%, #f6e8d6 18%, #f7e3dc 25%, #f3e9df 31%, #f9dcd4 36%, #f3e9df 43%, #f4e8dc 55%, #fadfd0 64%, #f4ead9 68%, #f5e2dc 75%, #f3e9e0 80%, #f7dcd6 86%, #f3e9df 93%, #f6efe6);
	}

	.menus,
	.status {
		display: flex;
		align-items: center;
	}

	.menus {
		gap: 38px;
	}

	.app {
		font-weight: 700;
	}

	.status {
		gap: 24px;
	}

	.status time {
		font-size: 28px;
	}

	.battery {
		display: flex;
		align-items: center;
		gap: 8px;
		font-size: 25px;
	}

	.window {
		flex: 1;
		min-height: 0;
		display: flex;
		flex-direction: column;
		margin: 2px 0 4px;
		overflow: hidden;
		border-radius: 10px;
		background: #fff;
		box-shadow: 0 2px 6px #0006;
	}

	.tabstrip {
		display: flex;
		align-items: flex-end;
		height: 92px;
		background: linear-gradient(#e0e5e9 0 7px, #b4b7bb 7px 8px, #dee1e6 8px);
	}

	.lights {
		display: flex;
		gap: 16px;
		align-self: center;
		padding: 10px 26px 0;
	}

	.lights span {
		width: 24px;
		height: 24px;
		border-radius: 50%;
	}

	.red {
		background: #ee6a5f;
	}

	.amber {
		background: #f5be4f;
	}

	.green {
		background: #61c454;
	}

	.tab {
		display: flex;
		align-items: center;
		gap: 16px;
		box-sizing: border-box;
		width: 480px;
		height: 68px;
		padding: 0 24px;
		border-radius: 16px 16px 0 0;
		background: #fff;
	}

	.tab-title {
		flex: 1;
		font-size: 24px;
		color: #3c4043;
	}

	.newtab {
		align-self: flex-end;
		padding: 0 32px 22px;
	}

	.toolbar {
		display: flex;
		align-items: center;
		height: 72px;
		padding: 0 40px 0 30px;
	}

	.history {
		display: flex;
		gap: 36px;
		padding-right: 29px;
	}

	.omnibox {
		flex: 1;
		display: flex;
		align-items: center;
		gap: 24px;
		height: 52px;
		padding: 0 16px 0 23px;
		border: 4px solid #b9d6fc;
		border-radius: 30px;
	}

	/* host in near-black, path in grey */
	.omnibox input {
		flex: 1;
		border: 0;
		padding: 0;
		outline: 0;
		font: 27px Inter, sans-serif;
		color: transparent;
		background: linear-gradient(90deg, #202124 393px, #6b6e72 393px);
		background-clip: text;
	}

	.extensions {
		display: flex;
		align-items: center;
		gap: 26px;
		padding-left: 27px;
	}

	.bar {
		width: 2px;
		height: 32px;
		margin-left: 2px;
		background: #cfd1d4;
	}

	.avatar {
		display: grid;
		place-items: center;
		width: 44px;
		height: 44px;
		margin-right: 12px;
		border-radius: 50%;
		font-size: 22px;
		color: #fff;
		background: #3a8577;
	}

	.bookmarks {
		display: flex;
		align-items: center;
		gap: 33px;
		height: 56px;
		padding: 0 28px 8px;
		border-bottom: 2px solid #dadce0;
		font-size: 24px;
		white-space: nowrap;
		color: #3c4043;
	}

	.bookmarks a {
		display: flex;
		align-items: center;
		gap: 16px;
	}

	.bookmarks .wide {
		width: 274px;
	}

	.bookmarks .other {
		margin-left: auto;
		padding-left: 20px;
		border-left: 2px solid #cfd1d4;
	}

	.page-head,
	main,
	footer,
	.check {
		font-family: Lato, sans-serif;
	}

	.page-head {
		display: grid;
		grid-template-columns: 1140px auto 1fr;
		align-items: center;
		height: 96px;
		padding: 0 224px 4px 200px;
		border-bottom: 2px solid #eee;
		color: #242424;
		background: #fcfcfc;
	}

	h1 {
		display: flex;
		align-items: center;
		gap: 14px;
		margin: 0;
		font-size: 32px;
		font-weight: 400;
	}

	.saved {
		width: 140px;
		border-radius: 24px;
		font-size: 23px;
		line-height: 48px;
		text-align: center;
		background: #e4e2e5;
	}

	.actions {
		display: flex;
		justify-content: flex-end;
		font-size: 28px;
		font-weight: 700;
		line-height: 40px;
	}

	.actions button + button {
		margin-left: 25px;
		padding-left: 25px;
		border-left: 2px solid #e9e9e9;
	}

	.actions .submit {
		color: #24477f;
	}

	main {
		flex: 1;
		min-height: 0;
		display: flex;
		align-items: flex-start;
		margin-bottom: 10px;
		padding: 0 220px 0 200px;
		overflow: hidden;
		color: #222;
	}

	aside {
		flex: none;
		width: 164px;
		padding-top: 20px;
		font-size: 25px;
	}

	.number {
		border: 2px solid #ececec;
		border-radius: 10px;
		font-family: "Open Sans", sans-serif;
		font-size: 136px;
		line-height: 184px;
		text-align: center;
	}

	.points {
		margin: 52px 0 18px;
		font-size: 26px;
		line-height: 35px;
		color: #666;
	}

	.points strong {
		display: block;
		font-weight: 400;
		font-size: 28px;
		color: #24477f;
	}

	.skipped {
		display: block;
		margin: 0 10px 56px;
		border-radius: 30px;
		line-height: 60px;
		text-align: center;
		background: #fadb4b;
	}

	.links {
		border: 2px solid #e6e6e6;
		border-radius: 10px;
		line-height: 57px;
		text-align: center;
		color: #4674b5;
	}

	.links a {
		display: block;
	}

	.links a + a {
		border-top: 2px solid #e6e6e6;
	}

	table {
		flex: 0 1 1580px;
		margin: 106px auto 0 56px;
		table-layout: fixed;
		border-collapse: collapse;
		font: 26px/26px "Liberation Mono", monospace;
	}

	th,
	td {
		height: 26px;
		padding: 4px 0 0;
		vertical-align: top;
	}

	th {
		font-weight: 400;
	}

	thead tr {
		background: #d8dce5;
	}

	tbody tr:nth-child(even) {
		background: #f6f6f6;
	}

	.first {
		padding-left: 32px;
	}

	.c-a {
		width: 190px;
	}

	.c-b {
		width: 206px;
	}

	.c-gap {
		width: 32px;
	}

	.c-c {
		width: 188px;
	}

	.c-d {
		width: 204px;
	}

	.label {
		padding-left: 31px;
		white-space: nowrap;
	}

	.level-1 {
		padding-left: 78px;
	}

	.level-2 {
		padding-left: 109px;
	}

	.bold {
		font-weight: 700;
	}

	.num {
		padding-right: 31px;
		text-align: right;
	}

	.num:has(.rule),
	.num:nth-child(4) {
		padding-right: 0;
	}

	.rule {
		margin-top: 10px;
		border-top: 2px solid #888;
	}

	.double {
		height: 12px;
		border-bottom: 2px solid #888;
	}

	.tall td {
		height: 40px;
	}

	.check {
		flex: none;
		width: 256px;
		margin-top: 16px;
		border-radius: 6px;
		font-size: 28px;
		font-weight: 700;
		line-height: 60px;
		color: #fff;
		background: #dae3ef;
	}

	footer {
		display: flex;
		align-items: center;
		height: 114px;
		padding: 2px 180px 0 200px;
		border-top: 2px solid #eee;
		background: linear-gradient(#fff 30%, #f8f8f8 70%, #ececec);
	}

	.pager {
		flex: 1;
		display: flex;
		justify-content: center;
		margin-bottom: 10px;
		color: #222;
	}

	.pager > * {
		display: flex;
		align-items: center;
		box-sizing: border-box;
		height: 90px;
		padding-top: 10px;
		border-left: 2px solid #ececec;
	}

	.prev,
	.next {
		width: 194px;
		padding-left: 37px;
		gap: 30px;
		font: 31px "Liberation Sans", sans-serif;
	}

	.pager .next {
		border-right: 2px solid #ececec;
	}

	.prev span,
	.next span {
		line-height: 26px;
		border-bottom: 3px dotted #222;
	}

	.count {
		width: 258px;
		padding-left: 38px;
		gap: 16px;
		font-size: 31px;
	}

	.count strong {
		font-weight: 900;
		color: #4674b5;
	}

	.count svg {
		margin-left: 26px;
	}

	.dock {
		display: flex;
		height: 122px;
		margin: 0 78px;
		padding: 0 14px 0 8px;
		border-radius: 12px 12px 0 0;
		z-index: 1;
		background:
			linear-gradient(#0000 0, #fff3),
			linear-gradient(90deg, #cbb99a 0, #cdb795 6%, #d3b297 11%, #cfb698 16%, #dd8078 20%, #de7a72 23%, #cdb291 27%, #cdb896 30%, #d4a892 36%, #ceb48a 40%, #c0a850 44%, #bba545 48%, #ccb262 51%, #cfba90 55%, #d3ac94 61%, #cdb896 66%, #d2a890 69%, #de7c74 73%, #de7a72 76%, #cdae90 79%, #cfbc98 83%, #d3aa94 89%, #cdab84 94%, #c39a4a);
	}

	.apps {
		flex: 1;
		display: flex;
		margin-right: 22px;
		border-right: 2px solid #a08663;
		border-image: linear-gradient(#0000 13%, #a08663 13% 87%, #0000 87%) 1;
		padding-right: 22px;
	}

	.slot {
		flex: 1;
		display: flex;
		flex-direction: column;
		align-items: center;
	}

	.slot,
	.trash {
		padding-top: 12px;
	}

	.dock-icon {
		width: 90px;
		height: 90px;
	}

	.trash {
		align-self: flex-start;
	}

	.dot {
		width: 8px;
		height: 8px;
		margin-top: 8px;
		border-radius: 50%;
	}

	.open {
		background: #5d4630;
	}

	.watermark {
		position: absolute;
		right: 8px;
		bottom: 0;
		font: 700 58px "Liberation Sans", sans-serif;
		color: #c9c6a6;
		text-shadow: 0 0 4px #3a3818, 0 0 4px #3a3818;
	}
</style>
